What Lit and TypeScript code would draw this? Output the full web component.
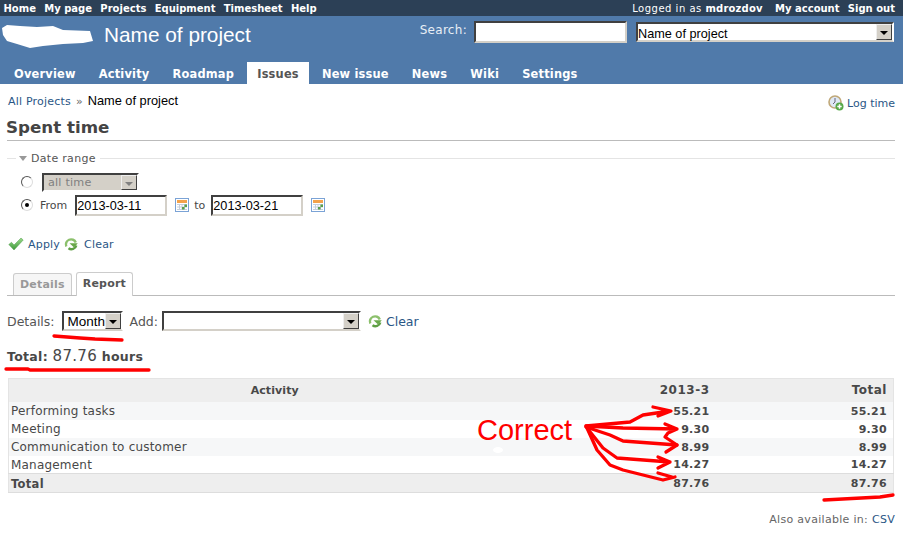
import { LitElement, html, css, svg } from "lit";
import { customElement } from "lit/decorators.js";

const arrow = html`<span class="cb"></span>`;

const calIcon = html`<svg class="cal" width="14" height="14" viewBox="0 0 14 14"><rect x=".5" y=".5" width="13" height="13" fill="#fff" stroke="#7ba3d6"/><rect x="2" y="2" width="10" height="3" fill="#f3a24b"/><path d="M2 6.500h10M2 9h10M2 11.500h10M4.500 6v6M7 6v6M9.500 6v6" stroke="#c6cfdb"/><rect x="7" y="9" width="2.500" height="2.500" fill="#5aa04a"/><rect x="9.500" y="6.500" width="2.500" height="2.500" fill="#5aa04a"/></svg>`;

const refresh = html`<svg class="ico" width="14" height="14" viewBox="0 0 14 14"><path d="M2.300 9.500A5 5 0 1 1 11.800 5.500" fill="none" stroke="#8cc06c" stroke-width="2.400"/><path d="M12.300 8.500A5 5 0 0 1 4.500 11.300" fill="none" stroke="#5f9f45" stroke-width="2.400"/><path d="M5.500 6.200h8.300L10 10.500z" fill="#6aa84a"/></svg>`;

const check = html`<svg class="ico" width="16" height="14" viewBox="0 0 16 14"><defs><linearGradient id="g" x1="0" y1="0" x2="0" y2="1"><stop offset="0" stop-color="#9ad98a"/><stop offset="1" stop-color="#3f9a3c"/></linearGradient></defs><path d="M.8 7.500 3.500 5.300 6 8 13 1 15.200 3 6 13z" fill="url(#g)" stroke="#4c9a48" stroke-width=".5"/></svg>`;

const rows = [
  ["Performing tasks", "55.21"],
  ["Meeting", "9.30"],
  ["Communication to customer", "8.99"],
  ["Management", "14.27"],
];

const ink = svg`<svg class="ink" width="903" height="544" viewBox="0 0 903 544" fill="none" stroke="#f00" stroke-linecap="round" stroke-linejoin="round">
  <g stroke-width="3.300">
    <path d="M586 426 630 422 643 415 670 411M653 407 671 411 658 416"/>
    <path d="M586 426 623 428 677 429M665 424 677 429 668 433 665 437 677 445 666 452"/>
    <path d="M586 427 610 435 623 441 677 445"/>
    <path d="M587 428 603 448 617 458 670 462M658 457 670 462 658 468"/>
    <path d="M587 428 597 450 610 465 623 470 663 480 675 477M658 473 672 477"/>
    <path d="M54 336 80 338 95 339 122 340"/>
    <path d="M6 369 28 369 30 370 149 370"/>
    <path d="M824 500 880 497 893 495"/>
  </g>
</svg>`;

@customElement("app-root")
export class AppRoot extends LitElement {
  static styles = css`
    :host { display: block; position: relative; width: 903px; height: 544px; overflow: hidden; background: #fff;
      font-family: "DejaVu Sans", Verdana, sans-serif; font-size: 11px; color: #484848; }
    a { color: #2a5685; text-decoration: none; }
    .top { height: 16px; background: #2c4056; color: #fff; display: flex; justify-content: space-between; align-items: center; padding: 0 8px 0 3.500px; font-size: 10px; font-weight: bold; }
    .top .group { display: flex; gap: 8.300px; }
    .top .logged { font-weight: normal; margin-right: 4px; letter-spacing: .5px; }
    .top b { font-weight: bold; letter-spacing: .2px; }
    .head { height: 68px; background: #507aaa; color: #fff; display: flex; flex-direction: column; }
    .hmain { height: 46px; display: flex; padding-left: 104px; position: relative; }
    .blob { position: absolute; left: 0; top: 2px; }
    h1 { margin: 7px 0 0; font: normal 20.800px "Liberation Sans", Arial, sans-serif; line-height: 24px; flex: 1; }
    .search { display: flex; align-items: flex-start; padding: 5px 9px 0 0; font-size: 12px; }
    .search label { margin: 2px 7px 0 0; color: #e8eef5; letter-spacing: .3px; }
    .inset { box-sizing: border-box; background: #fff; border: 2px solid; border-color: #404040 #d4d0c8 #d4d0c8 #404040; outline: 0; }
    .search .q { width: 153px; height: 22px; margin-right: 9px; }
    .sel { box-sizing: border-box; display: flex; align-items: center; justify-content: space-between; background: #fff; color: #000; border: 2px solid; border-color: #404040 #fff #d4d0c8 #404040; font: 12px "Liberation Sans", Arial, sans-serif; }
    .sel span:first-child { padding-left: 0; overflow: hidden; white-space: nowrap; }
    .cb { box-sizing: border-box; flex: none; width: 16px; height: 100%; background: #d4d0c8; border: 1px solid; border-color: #eee #404040 #404040 #eee; position: relative; }
    .cb::after { content: ""; position: absolute; left: 3px; top: 6px; border: 4px solid transparent; border-top-color: #000; border-bottom: 0; }
    .search .sel { width: 258px; height: 20px; margin-top: 1px; font-size: 12.700px; }
    .search .sel span:first-child { padding-top: 4px; }
    .tabs { display: flex; gap: 3.100px; height: 22px; padding-left: 4px; font-weight: bold; font-size: 11.400px; letter-spacing: .2px; }
    .tabs a { color: #fff; padding: 0 10px; line-height: 24px; }
    .tabs a.on { background: #fff; color: #555; }
    .content { padding: 0 8px 0 7px; }
    .crumb { display: flex; justify-content: space-between; height: 35px; padding-top: 9px; box-sizing: border-box; }
    .crumb .path { color: #000; font: 12.800px "Liberation Sans", Arial, sans-serif; display: flex; align-items: baseline; gap: 5px; }
    .crumb .path a { font: 11px "DejaVu Sans", sans-serif; letter-spacing: .2px; margin-left: 1px; }
    .crumb .path i { font: 11px "DejaVu Sans", sans-serif; color: #666; }
    .log { display: flex; align-items: center; gap: 3px; height: 14px; font-size: 11px; padding-top: 3px; }
    h2 { margin: 0; font-size: 16.700px; line-height: 16px; height: 21px; border-bottom: 1px solid #bbb; color: #444; text-indent: -1px; }
    .legend { display: flex; align-items: center; height: 13px; margin-top: 11px; font-size: 11px; gap: 3px; padding-left: 12px; letter-spacing: .3px; color: #555; position: relative; }
    .legend::after { content: ""; flex: 1; height: 0; border-top: 1px solid #e4e4e4; margin-left: 1px; }
    .legend::before { content: ""; position: absolute; left: 0; width: 9px; border-top: 1px solid #e4e4e4; }
    .tri { width: 0; height: 0; border: 4px solid transparent; border-top: 5px solid #999; border-bottom: 0; margin-right: 1px; }
    .r1 { display: flex; align-items: center; gap: 9px; height: 20px; margin-top: 7px; padding-left: 14px; }
    .radio { box-sizing: border-box; width: 12px; height: 12px; border-radius: 50%; background: #fff; border: 1px solid; border-color: #555 #ddd #ddd #555; position: relative; flex: none; }
    .radio.on::after { content: ""; position: absolute; left: 3px; top: 3px; width: 4px; height: 4px; border-radius: 50%; background: #000; }
    .sel.off { width: 97px; height: 19px; background: #d4d0c8; color: #808080; border-color: #404040 #fff #fff #404040; font: 11.200px "DejaVu Sans", sans-serif; letter-spacing: .2px; }
    .sel.off .cb::after { border-top-color: #808080; }
    .sel.off span:first-child { padding-left: 4px; }
    .r2 { display: flex; align-items: center; height: 20px; margin-top: 3px; padding-left: 14px; }
    .r2 .radio { margin-right: 7px; }
    .from { margin-right: 3px; }
    .date { width: 92px; height: 21px; font: 12.700px "Liberation Sans", Arial, sans-serif; color: #000; padding: 2px 0 0; line-height: 15px; margin: 0 8px 0 5px; }
    .cal { flex: none; }
    .to { margin: 0 1px 0 5px; }
    .acts { display: flex; align-items: center; height: 14px; margin-top: 22px; padding-left: 1px; letter-spacing: .2px; }
    .ico { flex: none; }
    .acts a:first-of-type { margin: 0 4px 0 4px; }
    .acts a { margin: 0 6px 0 6px; }
    .tabbar { display: flex; gap: 4px; height: 23px; margin-top: 21px; padding-left: 6px; border-bottom: 1px solid #bbb; font-weight: bold; }
    .tabbar span { box-sizing: border-box; height: 23px; border: 1px solid #ccc; border-bottom: 0; border-radius: 3px 3px 0 0; padding: 0 6px; line-height: 22px; letter-spacing: .2px; }
    .tabbar .off { background: #f6f6f6; color: #999; height: 22px; margin-top: 1px; line-height: 21px; }
    .tabbar .cur { background: #fff; color: #555; height: 24px; }
    .det { display: flex; align-items: center; height: 20px; margin-top: 15px; font-size: 12.500px; color: #555; }
    .det .sel { height: 20px; font-size: 13.500px; }
    .det .sel span:first-child { padding-left: 4px; }
    .det .m { width: 61px; margin: 0 7px; }
    .det .a { width: 199px; margin: 0 7px 0 4px; }
    .det a { margin-left: 4px; }
    .total { height: 18px; margin-top: 16px; font-weight: bold; font-size: 12.500px; line-height: 18px; letter-spacing: .3px; color: #484848; }
    .total em { font: normal 15px "DejaVu Sans", sans-serif; letter-spacing: .3px; }
    table { border-collapse: collapse; table-layout: fixed; width: 886px; margin: 13px 0 0 1px; border: 1px solid #e4e4e4; font-size: 11px; }
    td, th { padding: 0; height: 18px; overflow: hidden; white-space: nowrap; box-sizing: border-box; }
    thead th { height: 23px; background: #eee; letter-spacing: .1px; }
    thead th.num { font-size: 12px; letter-spacing: .5px; }
    tbody td { padding-top: 1px; }
    tbody td:first-child { padding-left: 2px; font-size: 12px; letter-spacing: .2px; }
    .num { text-align: right; padding-right: 7px; font-weight: bold; letter-spacing: .3px; }
    tr > :last-child { padding-right: 6px; }
    tr.odd { background: #f6f7f8; }
    tr.sum td { background: #eee; border-top: 1px solid #ddd; border-bottom: 1px solid #ddd; font-weight: bold; height: 19px; }
    tr.sum td:first-child { font-size: 11.500px; letter-spacing: .3px; }
    .foot { text-align: right; margin-top: 20px; font-size: 11px; color: #666; letter-spacing: .3px; }
    .correct { position: absolute; left: 477px; top: 412px; font: 29px "Liberation Sans", Arial, sans-serif; line-height: 36px; color: #f00; }
    .ink { position: absolute; left: 0; top: 0; pointer-events: none; }
    .smudge { position: absolute; left: 493px; top: 447px; width: 10px; height: 6px; border-radius: 50%; background: #fff; }
  `;

  render() {
    return html`
      <div class="top">
        <div class="group"><span>Home</span><span>My page</span><span>Projects</span><span>Equipment</span><span>Timesheet</span><span>Help</span></div>
        <div class="group"><span class="logged">Logged in as <b>mdrozdov</b></span><span>My account</span><span>Sign out</span></div>
      </div>
      <div class="head">
        <div class="hmain">
          <svg class="blob" width="100" height="34" viewBox="0 0 100 34"><path d="M2 10 7 7 20 8 37 9 53 8 63 12 90 13 93 23 83 25 63 26 43 28 30 30 17 26 7 23 3 17z" fill="#fff"/></svg>
          <h1>Name of project</h1>
          <div class="search">
            <label>Search:</label>
            <div class="inset q"></div>
            <div class="sel"><span>Name of project</span>${arrow}</div>
          </div>
        </div>
        <nav class="tabs">
          <a>Overview</a><a>Activity</a><a>Roadmap</a><a class="on">Issues</a><a>New issue</a><a>News</a><a>Wiki</a><a>Settings</a>
        </nav>
      </div>
      <div class="content">
        <div class="crumb">
          <div class="path"><a>All Projects</a><i>»</i><span>Name of project</span></div>
          <a class="log">
            <svg width="16" height="16" viewBox="0 0 16 16"><circle cx="7" cy="7" r="6" fill="#dfe8f5" stroke="#c0a878" stroke-width="1.600"/><path d="M7 3V7L5 9" fill="none" stroke="#667" stroke-width="1"/><circle cx="11.500" cy="11.500" r="4" fill="#58a848"/><path d="M9.300 11.500h4.400M11.500 9.300v4.400" stroke="#fff" stroke-width="1.500"/></svg>
            Log time
          </a>
        </div>
        <h2>Spent time</h2>
        <div class="legend"><span class="tri"></span>Date range</div>
        <div class="r1"><span class="radio"></span><div class="sel off"><span>all time</span>${arrow}</div></div>
        <div class="r2"><span class="radio on"></span><span class="from">From</span>
          <div class="inset date">2013-03-11</div>${calIcon}<span class="to">to</span>
          <div class="inset date">2013-03-21</div>${calIcon}</div>
        <div class="acts">${check}<a>Apply</a>${refresh}<a>Clear</a></div>
        <div class="tabbar"><span class="off">Details</span><span class="cur">Report</span></div>
        <div class="det">Details:<div class="sel m"><span>Month</span>${arrow}</div>Add:<div class="sel a"><span></span>${arrow}</div>${refresh}<a>Clear</a></div>
        <div class="total">Total: <em>87.76</em> hours</div>
        <table>
          <colgroup><col style="width:532px"><col style="width:176px"><col></colgroup>
          <thead><tr><th>Activity</th><th class="num">2013-3</th><th class="num">Total</th></tr></thead>
          <tbody>
            ${rows.map((r, i) => html`<tr class=${i % 2 ? "" : "odd"}><td>${r[0]}</td><td class="num">${r[1]}</td><td class="num">${r[1]}</td></tr>`)}
            <tr class="sum"><td>Total</td><td class="num">87.76</td><td class="num">87.76</td></tr>
          </tbody>
        </table>
        <div class="foot">Also available in: <a>CSV</a></div>
      </div>
      <div class="smudge"></div>
      <div class="correct">Correct</div>
      ${ink}
    `;
  }
}
